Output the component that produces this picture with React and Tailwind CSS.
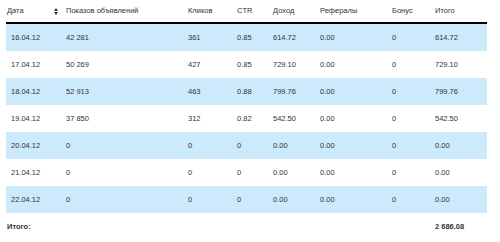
const rows = [
  ['16.04.12', '42 281', '361', '0.85', '614.72', '0.00', '0', '614.72'],
  ['17.04.12', '50 269', '427', '0.85', '729.10', '0.00', '0', '729.10'],
  ['18.04.12', '52 913', '463', '0.88', '799.76', '0.00', '0', '799.76'],
  ['19.04.12', '37 850', '312', '0.82', '542.50', '0.00', '0', '542.50'],
  ['20.04.12', '0', '0', '0', '0.00', '0.00', '0', '0.00'],
  ['21.04.12', '0', '0', '0', '0.00', '0.00', '0', '0.00'],
  ['22.04.12', '0', '0', '0', '0.00', '0.00', '0', '0.00'],
];

const cols = 'grid grid-cols-[60px_122px_49px_36px_47px_72px_43px_52px]';

function SortIcon() {
  return (
    <svg width="4" height="7" viewBox="0 0 4 7" className="ml-auto mr-[8px]">
      <path d="M2 0 L4 3 L0 3 Z M0 4 L4 4 L2 7 Z" fill="#333" />
    </svg>
  );
}

export default function App() {
  return (
    <div className="w-[500px] h-[242px] bg-white pl-[6px] text-[7.5px] text-[#333] font-['Liberation_Sans',Arial,sans-serif]">
      <div className="w-[481px]">
        {/* Header */}
        <div className={`${cols} h-[24px] items-center border-b-2 border-black`}>
          <div className="flex items-center pl-[1px]">
            <span>Дата</span>
            <SortIcon />
          </div>
          <div>Показов объявлений</div>
          <div>Кликов</div>
          <div>CTR</div>
          <div>Доход</div>
          <div>Рефералы</div>
          <div>Бонус</div>
          <div>Итого</div>
        </div>

        {rows.map((r, i) => (
          <div
            key={r[0]}
            className={`${cols} h-[27px] items-center ${i % 2 === 0 ? 'bg-[#cde9fc]' : 'bg-white'}`}
          >
            {r.map((c, j) => (
              <div key={j} className={j === 0 ? 'pl-[5px]' : ''}>{c}</div>
            ))}
          </div>
        ))}

        {/* Total */}
        <div className={`${cols} h-[28px] items-center font-bold`}>
          <div className="pl-[1px]">Итого:</div>
          <div className="col-start-8">2 686.08</div>
        </div>
      </div>
    </div>
  );
}
